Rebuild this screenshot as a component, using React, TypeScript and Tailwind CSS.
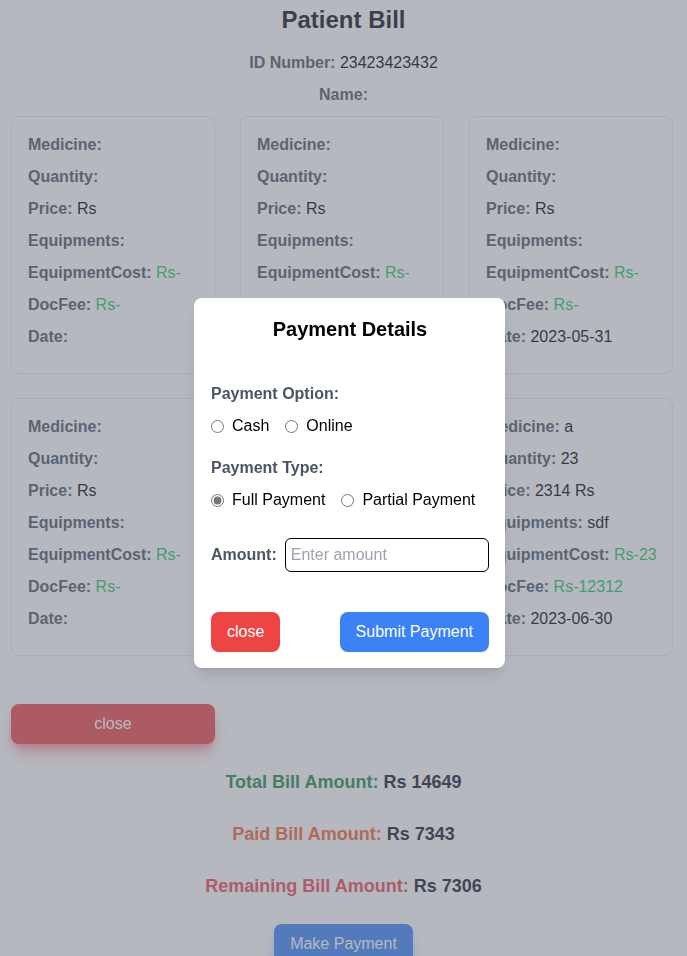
interface Bill {
  medicine: string;
  quantity: string;
  price: string;
  equipments: string;
  equipmentCost: string;
  docFee: string;
  date: string;
}

const bills: Bill[] = [
  { medicine: "", quantity: "", price: "", equipments: "", equipmentCost: "", docFee: "", date: "" },
  { medicine: "", quantity: "", price: "", equipments: "", equipmentCost: "", docFee: "", date: "" },
  { medicine: "", quantity: "", price: "", equipments: "", equipmentCost: "", docFee: "", date: "2023-05-31" },
  { medicine: "", quantity: "", price: "", equipments: "", equipmentCost: "", docFee: "", date: "" },
  { medicine: "", quantity: "", price: "", equipments: "", equipmentCost: "", docFee: "", date: "" },
  { medicine: "a", quantity: "23", price: "2314", equipments: "sdf", equipmentCost: "23", docFee: "12312", date: "2023-06-30" },
];

const Row = ({ label, children }: { label: string; children?: React.ReactNode }) => (
  <p className="mb-2 whitespace-nowrap leading-6">
    <span className="font-bold text-[#4b5563]">{label}:</span> {children}
  </p>
);

const BillCard = ({ bill }: { bill: Bill }) => (
  <div className="rounded-lg border border-[#e5e7eb] p-4">
    <Row label="Medicine">{bill.medicine}</Row>
    <Row label="Quantity">{bill.quantity}</Row>
    <Row label="Price">{bill.price ? `${bill.price} Rs` : "Rs"}</Row>
    <Row label="Equipments">{bill.equipments}</Row>
    <Row label="EquipmentCost">
      <span className="text-[#22c55e]">Rs-{bill.equipmentCost}</span>
    </Row>
    <Row label="DocFee">
      <span className="text-[#22c55e]">Rs-{bill.docFee}</span>
    </Row>
    <Row label="Date">{bill.date}</Row>
  </div>
);

const Radio = ({ name, label, checked }: { name: string; label: string; checked?: boolean }) => (
  <label className="mr-4 flex shrink-0 items-center whitespace-nowrap last:mr-0">
    <input
      type="radio"
      name={name}
      defaultChecked={checked}
      className="m-0 h-[13px] w-[13px] accent-[#767676]"
    />
    <span className="ml-2">{label}</span>
  </label>
);

export default function App() {
  return (
    <div className="relative min-h-screen bg-white pb-10 font-['Liberation_Sans',Arial,sans-serif] text-black">
      <h1 className="mt-1 text-center text-2xl font-bold leading-8 text-[#0b0d12]">
        Patient Bill
      </h1>
      <p className="mt-[15px] text-center leading-6">
        <span className="font-bold text-[#4b5563]">ID Number:</span> 23423423432
      </p>
      <p className="mt-2 text-center leading-6">
        <span className="font-bold text-[#4b5563]">Name:</span>
      </p>

      <div className="mt-[9px] pl-[11px] pr-[14px]">
        <div className="grid grid-cols-3 gap-x-[25px] gap-y-6">
          {bills.map((b, i) => (
            <BillCard key={i} bill={b} />
          ))}
        </div>

        <button className="mt-12 h-10 w-[204px] rounded-lg bg-[#ef4444] text-white shadow-lg shadow-red-500/50">
          close
        </button>
      </div>

      <div className="text-center text-lg font-bold leading-7">
        <p className="mt-6">
          <span className="text-[#178a45]">Total Bill Amount:</span>{" "}
          <span className="text-[#111827]">Rs 14649</span>
        </p>
        <p className="mt-6">
          <span className="text-[#f4622a]">Paid Bill Amount:</span>{" "}
          <span className="text-[#111827]">Rs 7343</span>
        </p>
        <p className="mt-6">
          <span className="text-[#ec4656]">Remaining Bill Amount:</span>{" "}
          <span className="text-[#111827]">Rs 7306</span>
        </p>
      </div>

      <div className="mt-6 flex justify-center">
        <button className="h-10 rounded-lg bg-[#3b82f6] px-4 text-white shadow-lg shadow-blue-500/50">
          Make Payment
        </button>
      </div>

      <div className="fixed inset-0 flex items-center justify-center bg-[rgba(107,114,128,0.5)]">
        <div className="ml-3 mt-[10px] w-[311px] rounded-lg bg-white py-4 pl-[17px] pr-4 shadow-lg">
          <h2 className="mt-px text-center text-xl font-bold leading-7">Payment Details</h2>

          <p className="mt-[39px] font-bold leading-6 text-[#4b5563]">Payment Option:</p>
          <div className="mt-2 flex items-center leading-6">
            <Radio name="option" label="Cash" />
            <Radio name="option" label="Online" />
          </div>

          <p className="mt-[18px] font-bold leading-6 text-[#4b5563]">Payment Type:</p>
          <div className="mt-2 flex items-center leading-6">
            <Radio name="type" label="Full Payment" checked />
            <Radio name="type" label="Partial Payment" />
          </div>

          <div className="mt-[26px] flex items-center">
            <span className="mr-2 font-bold text-[#4b5563]">Amount:</span>
            <input
              type="text"
              placeholder="Enter amount"
              className="h-[34px] min-w-0 flex-1 rounded-md border border-black px-[5px] outline-none placeholder:text-[#9ca3af]"
            />
          </div>

          <div className="mt-10 flex justify-between">
            <button className="h-10 rounded-lg bg-[#ef4444] px-4 text-white">close</button>
            <button className="h-10 rounded-lg bg-[#3b82f6] px-4 text-white">Submit Payment</button>
          </div>
        </div>
      </div>
    </div>
  );
}
